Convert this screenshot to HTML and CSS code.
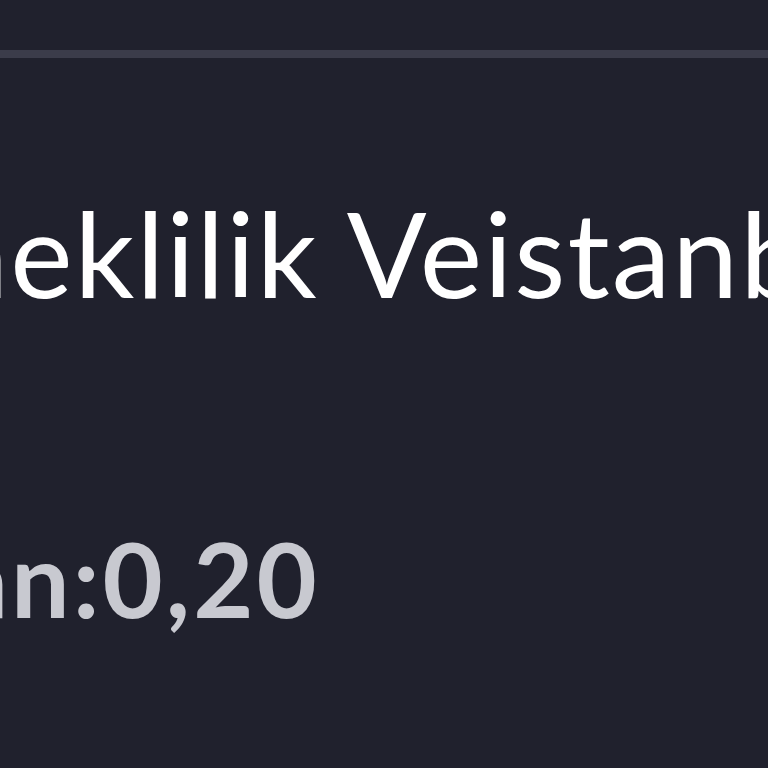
FILE: index.html
```html
<!DOCTYPE html>
<html lang="tr">
<head>
<meta charset="utf-8">
<link rel="stylesheet" href="styles.css">
</head>
<body>
<div class="page">
  <div class="topbar"></div>
  <div class="rule"></div>
  <div class="content">
    <h1 class="title"><span class="shift-title">Esneklilik Veistanbul</span></h1>
    <p class="stat"><span class="shift-stat">Oran:0,20</span></p>
  </div>
</div>
</body>
</html>
```
FILE: styles.css
```css
html, body {
  margin: 0;
  padding: 0;
  background: #20212d;
  overflow: hidden;
}
.page {
  width: 768px;
  height: 768px;
  overflow: hidden;
  background: #20212d;
}
.topbar {
  height: 50px;
}
.rule {
  height: 8px;
  background: #3b3c4a;
}
.content {
  display: flex;
  flex-direction: column;
}
.title {
  margin: 0;
  padding-top: 125px;
  font-family: Lato, "Open Sans", sans-serif;
  font-weight: 400;
  font-size: 118px;
  line-height: 140px;
  letter-spacing: 2px;
  color: #ffffff;
  white-space: nowrap;
}
.shift-title {
  display: inline-block;
  margin-left: -180px;
}
.stat {
  margin: 0;
  padding-top: 195px;
  font-family: Lato, "Open Sans", sans-serif;
  font-weight: 700;
  font-size: 104px;
  line-height: 120px;
  letter-spacing: 3px;
  color: #c8c9d0;
  white-space: nowrap;
}
.shift-stat {
  display: inline-block;
  margin-left: -172px;
}
```
